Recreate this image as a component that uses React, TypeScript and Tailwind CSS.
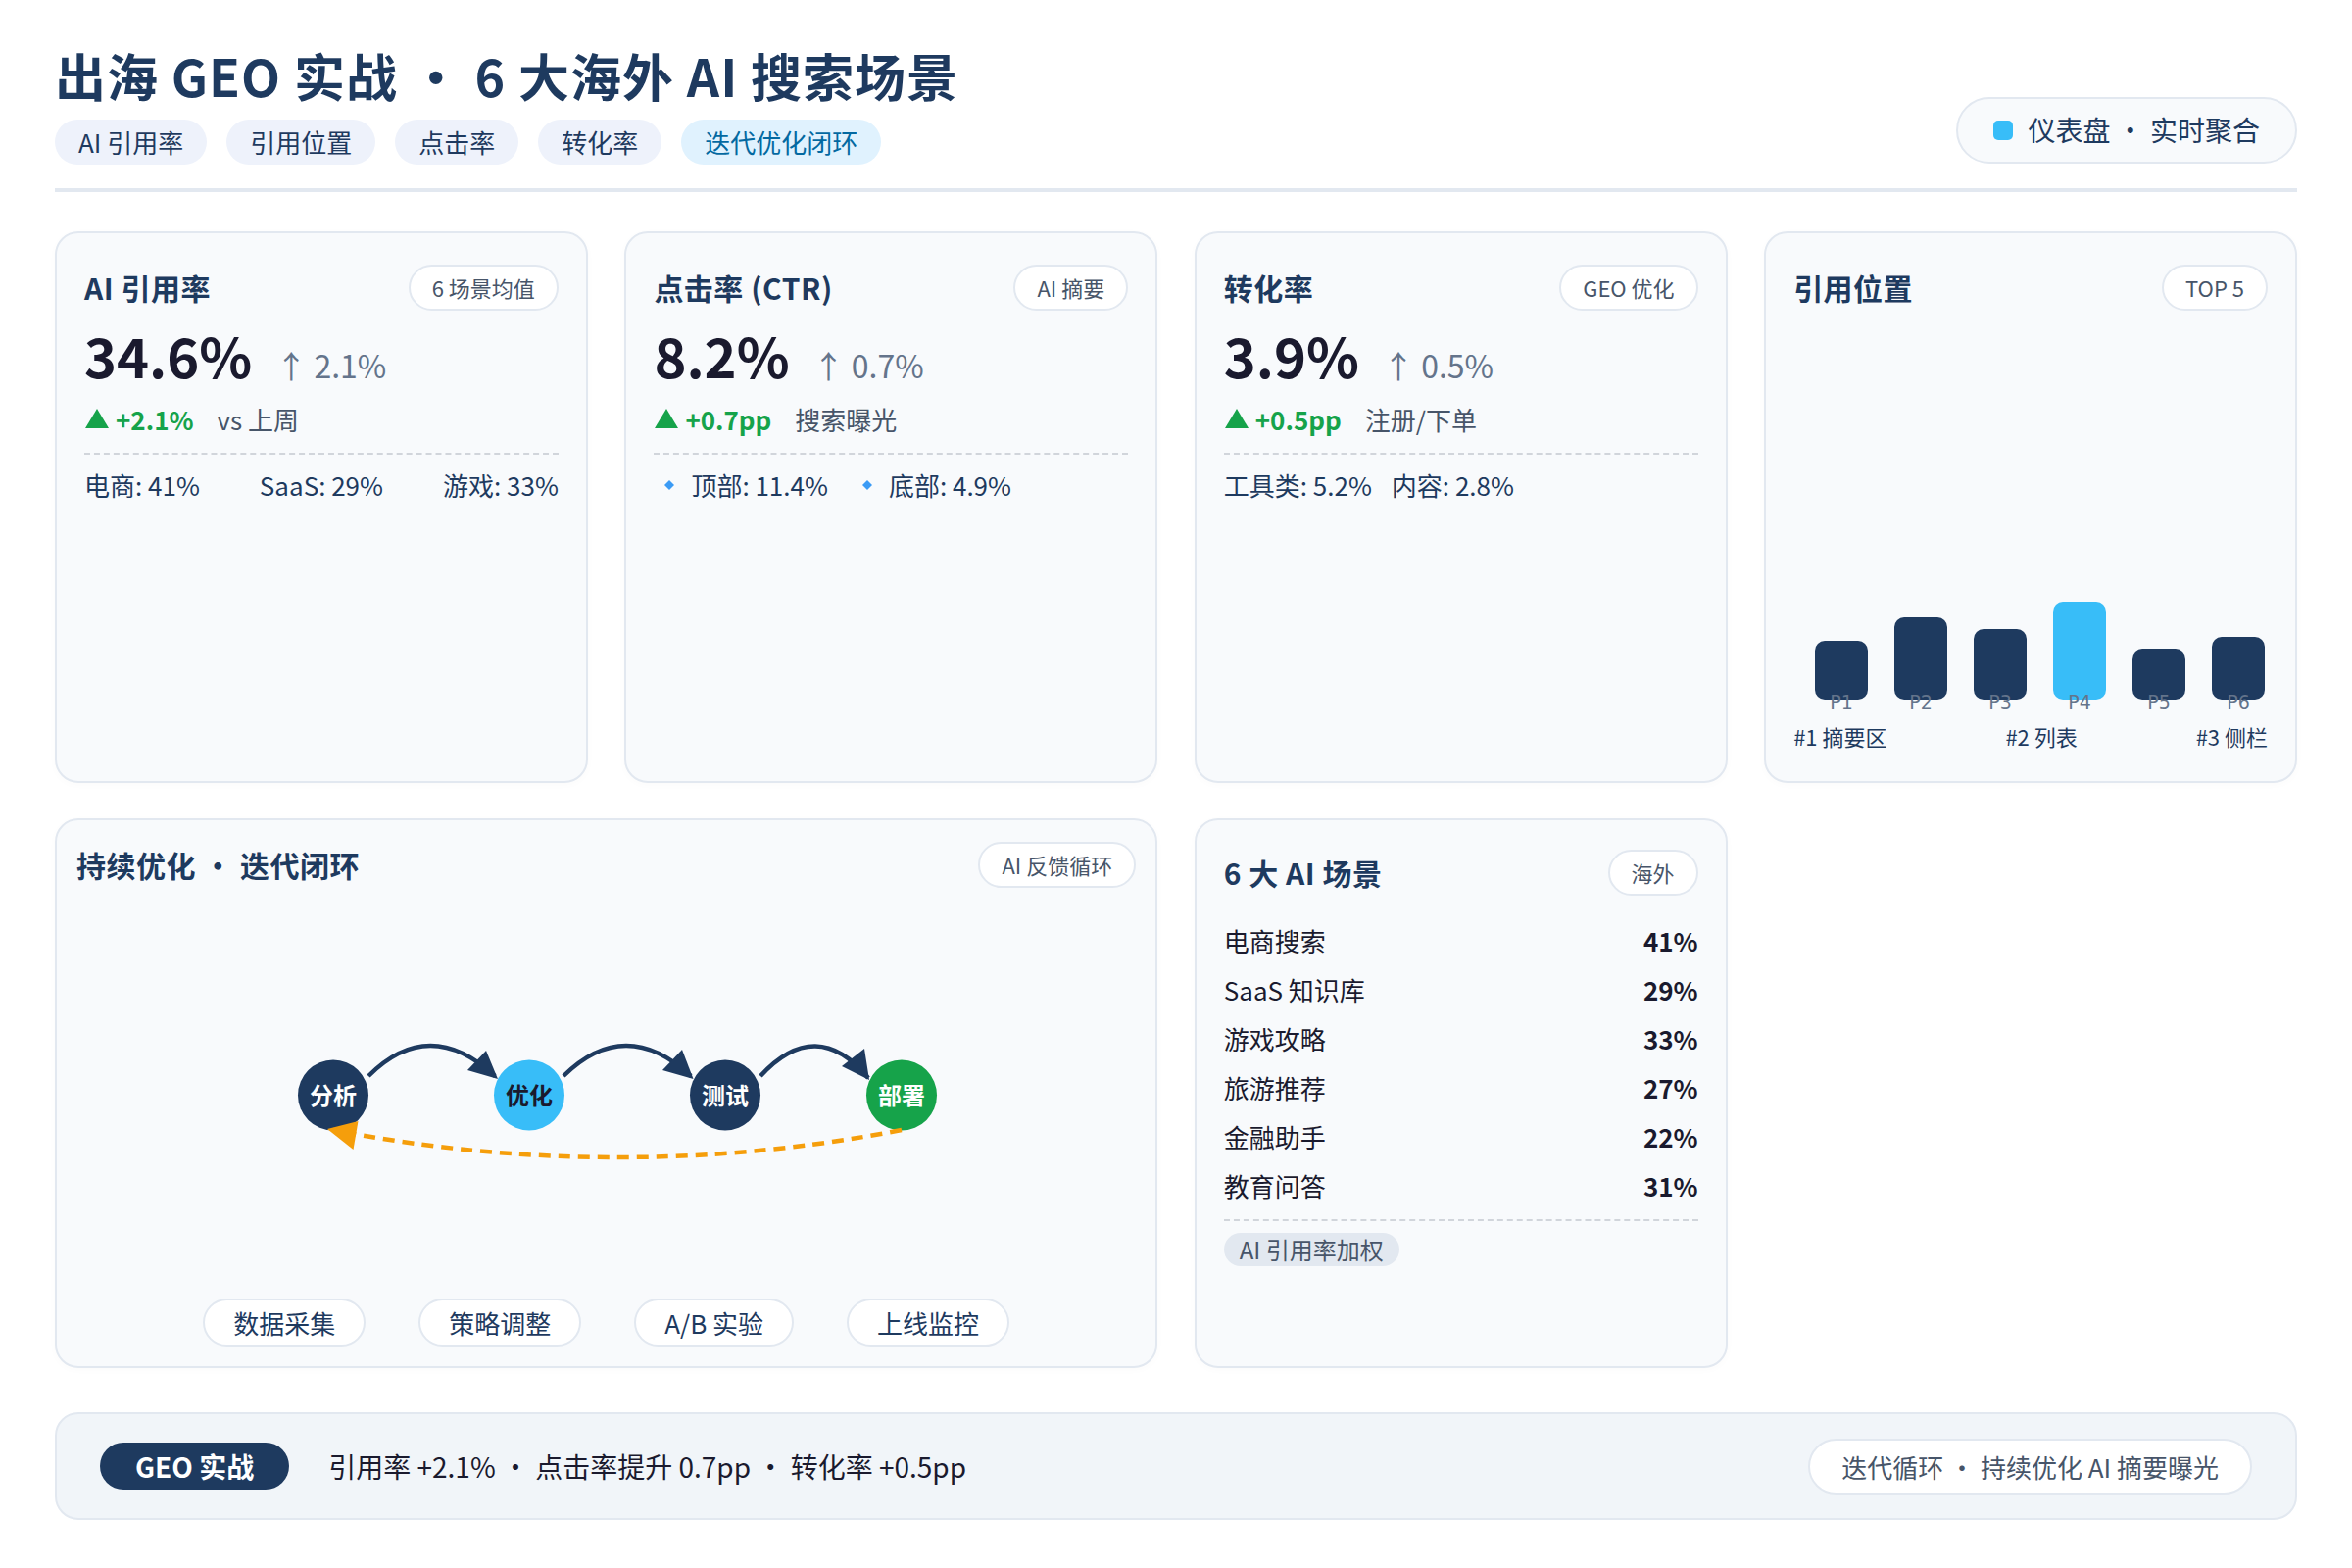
const font = "font-['Noto_Sans_CJK_SC','Noto_Sans',sans-serif]";

function Pill({ children }: { children: React.ReactNode }) {
  return (
    <span className="flex h-[47px] items-center rounded-full border-2 border-[#e2e8f0] bg-white px-[22px] text-[22px] text-[#475569]">
      {children}
    </span>
  );
}

function CardHead({ title, pill }: { title: string; pill: string }) {
  return (
    <div className="flex items-center justify-between">
      <span className="text-[30px] font-bold tracking-[0.5px] text-[#1e3a5f]">{title}</span>
      <Pill>{pill}</Pill>
    </div>
  );
}

function Diamond() {
  return (
    <svg width="12" height="12" viewBox="0 0 12 12" className="mr-[16px] shrink-0">
      <path d="M6 1 L11 6 L6 11 L1 6 Z" fill="#3b9bf5" />
    </svg>
  );
}

function Metric({
  title,
  pill,
  value,
  up,
  delta,
  note,
  children,
}: {
  title: string;
  pill: string;
  value: string;
  up: string;
  delta: string;
  note: string;
  children: React.ReactNode;
}) {
  return (
    <div className="h-[563px] rounded-[24px] border-2 border-[#e2e8f0] bg-[#f8fafc] px-[28px] pt-[32px] shadow-[0_2px_8px_rgba(0,0,0,0.02)]">
      <CardHead title={title} pill={pill} />
      <div className="mt-[3px] flex h-[72px] items-baseline">
        <span className="text-[56px] font-bold text-[#1a1a2e]">{value}</span>
        <span className="ml-[24px] text-[32px] text-[#64748b]">{up}</span>
      </div>
      <div className="mt-[15px] flex h-[40px] items-center">
        <svg width="26" height="20" viewBox="0 0 26 20" className="shrink-0">
          <path d="M13 0 L25 20 L1 20 Z" fill="#16a34a" />
        </svg>
        <span className="ml-[6px] text-[26px] font-bold text-[#16a34a]">{delta}</span>
        <span className="ml-[24px] text-[26px] text-[#475569]">{note}</span>
      </div>
      <div className="mt-[15px] border-t-2 border-dashed border-[#d1d5db] pt-[11px] text-[26px] text-[#1e3a5f]">
        {children}
      </div>
    </div>
  );
}

const bars = [
  { label: "P1", h: "h-[60px]", c: "bg-[#1e3a5f]" },
  { label: "P2", h: "h-[84px]", c: "bg-[#1e3a5f]" },
  { label: "P3", h: "h-[72px]", c: "bg-[#1e3a5f]" },
  { label: "P4", h: "h-[100px]", c: "bg-[#38bdf8]" },
  { label: "P5", h: "h-[52px]", c: "bg-[#1e3a5f]" },
  { label: "P6", h: "h-[64px]", c: "bg-[#1e3a5f]" },
];

const scenes = [
  ["电商搜索", "41%"],
  ["SaaS 知识库", "29%"],
  ["游戏攻略", "33%"],
  ["旅游推荐", "27%"],
  ["金融助手", "22%"],
  ["教育问答", "31%"],
];

function Loop() {
  const nodes = [
    { x: 340, t: "分析", f: "#1e3a5f", c: "#ffffff" },
    { x: 540, t: "优化", f: "#38bdf8", c: "#1a1a2e" },
    { x: 740, t: "测试", f: "#1e3a5f", c: "#ffffff" },
    { x: 920, t: "部署", f: "#16a34a", c: "#ffffff" },
  ];
  return (
    <svg width="1122" height="300" viewBox="58 960 1122 300" className="block">
      {nodes.map((n) => (
        <g key={n.t}>
          <circle cx={n.x} cy={1117.5} r={36} fill={n.f} />
          <text x={n.x} y={1127} textAnchor="middle" fontSize="24" fontWeight="700" fill={n.c}>
            {n.t}
          </text>
        </g>
      ))}
      <g fill="none" stroke="#1e3a5f" strokeWidth="4.5">
        <path d="M376 1098 Q438 1036 505 1098" />
        <path d="M575 1098 Q638 1036 705 1098" />
        <path d="M776 1098 Q833 1036 886 1100" />
      </g>
      <polygon points="508,1101 496,1072 477,1092" fill="#1e3a5f" />
      <polygon points="707.5,1101 696,1071 676,1092" fill="#1e3a5f" />
      <polygon points="887,1102 882,1070 859,1088" fill="#1e3a5f" />
      <path d="M920 1153 Q630 1209 340 1153" fill="none" stroke="#f59e0b" strokeWidth="4.5" strokeDasharray="12 8" />
      <polygon points="334,1152 365.5,1144 360.5,1173" fill="#f59e0b" />
    </svg>
  );
}

export default function App() {
  return (
    <div className={`h-[1600px] w-[2400px] bg-white px-[56px] pt-[46px] ${font}`}>
      <header className="flex items-end justify-between border-b-[4px] border-[#e2e8f0] pb-[24px]">
        <div>
          <h1 className="text-[52px] leading-[62px] font-bold tracking-[1px] text-[#1e3a5f]">出海 GEO 实战 · 6 大海外 AI 搜索场景</h1>
          <div className="mt-[14px] flex gap-[20px] text-[26px] text-[#1e3a5f]">
            {["AI 引用率", "引用位置", "点击率", "转化率"].map((t) => (
              <span key={t} className="flex h-[46px] items-center rounded-full bg-[#eef2fb] px-[24px] pb-[2px]">
                {t}
              </span>
            ))}
            <span className="flex h-[46px] items-center rounded-full bg-[#e0f2fe] px-[24px] pb-[2px] text-[#0369a1]">迭代优化闭环</span>
          </div>
        </div>
        <div className="mb-[1px] flex h-[68px] items-center rounded-full border-2 border-[#e2e8f0] bg-[#f8fafc] pr-[36px] pb-[2px] pl-[36px] text-[28px] text-[#1e3a5f]">
          <span className="mt-[2px] mr-[15px] h-[20px] w-[20px] rounded-[5px] bg-[#38bdf8]" />
          仪表盘 · 实时聚合
        </div>
      </header>

      <main className="mt-[40px] grid grid-cols-4 gap-x-[37.5px] gap-y-[36px]">
        <Metric title="AI 引用率" pill="6 场景均值" value="34.6%" up="↑ 2.1%" delta="+2.1%" note="vs 上周">
          <div className="flex justify-between">
            <span>电商: 41%</span>
            <span>SaaS: 29%</span>
            <span>游戏: 33%</span>
          </div>
        </Metric>
        <Metric title="点击率 (CTR)" pill="AI 摘要" value="8.2%" up="↑ 0.7%" delta="+0.7pp" note="搜索曝光">
          <div className="flex items-center pl-[10px]">
            <Diamond />
            <span>顶部: 11.4%</span>
            <span className="ml-[34px] flex items-center">
              <Diamond />
              底部: 4.9%
            </span>
          </div>
        </Metric>
        <Metric title="转化率" pill="GEO 优化" value="3.9%" up="↑ 0.5%" delta="+0.5pp" note="注册/下单">
          <div className="flex gap-[20px]">
            <span>工具类: 5.2%</span>
            <span>内容: 2.8%</span>
          </div>
        </Metric>

        <div className="flex h-[563px] flex-col rounded-[24px] border-2 border-[#e2e8f0] bg-[#f8fafc] px-[28px] pt-[32px] shadow-[0_2px_8px_rgba(0,0,0,0.02)]">
          <CardHead title="引用位置" pill="TOP 5" />
          <div className="mt-auto flex items-end gap-[27px] pl-[22px]">
            {bars.map((b) => (
              <div key={b.label} className="flex w-[54px] flex-col items-center">
                <div className={`w-[54px] rounded-[10px] ${b.h} ${b.c}`} />
                <span className="-mt-[8px] font-['DejaVu_Sans'] text-[19px] leading-[20px] text-[#64748b]">{b.label}</span>
              </div>
            ))}
          </div>
          <div className="mt-[9px] mb-[30px] flex justify-between text-[22px] leading-[32px] text-[#1e3a5f]">
            <span>#1 摘要区</span>
            <span>#2 列表</span>
            <span>#3 侧栏</span>
          </div>
        </div>

        <div className="col-span-2 flex h-[561px] flex-col rounded-[24px] border-2 border-[#e2e8f0] bg-[#f8fafc] px-[20px] pt-[22px] shadow-[0_2px_8px_rgba(0,0,0,0.02)]">
          <CardHead title="持续优化 · 迭代闭环" pill="AI 反馈循环" />
          <div className="-mx-[20px] mt-[54px]">
            <Loop />
          </div>
          <div className="mt-auto mb-[20px] flex justify-center gap-[54px] text-[26px] text-[#1e3a5f]">
            {["数据采集", "策略调整", "A/B 实验", "上线监控"].map((t) => (
              <span key={t} className="flex h-[49px] items-center rounded-full border-2 border-[#e2e8f0] bg-white px-[29px]">
                {t}
              </span>
            ))}
          </div>
        </div>

        <div className="h-[561px] rounded-[24px] border-2 border-[#e2e8f0] bg-[#f8fafc] px-[28px] pt-[30px] shadow-[0_2px_8px_rgba(0,0,0,0.02)]">
          <CardHead title="6 大 AI 场景" pill="海外" />
          <div className="mt-[20px] flex flex-col">
            {scenes.map(([k, v]) => (
              <div key={k} className="flex h-[50px] items-center justify-between text-[26px] text-[#1a1a2e]">
                <span>{k}</span>
                <span className="font-bold text-[#1a1a2e]">{v}</span>
              </div>
            ))}
          </div>
          <div className="mt-[10px] border-t-2 border-dashed border-[#d1d5db] pt-[12px]">
            <span className="inline-flex h-[34px] items-center rounded-full bg-[#e2e8f0] px-[16px] text-[24px] text-[#475569]">AI 引用率加权</span>
          </div>
        </div>
      </main>

      <footer className="mt-[45px] flex h-[110px] items-center justify-between rounded-[24px] border-2 border-[#e2e8f0] bg-[#f1f5f9] pr-[44px] pl-[44px]">
        <div className="flex items-center">
          <span className="flex h-[48px] items-center rounded-full bg-[#1e3a5f] px-[36px] text-[28px] font-bold text-white">GEO 实战</span>
          <span className="ml-[40px] text-[28px] text-[#1a1a2e]">引用率 +2.1% · 点击率提升 0.7pp · 转化率 +0.5pp</span>
        </div>
        <span className="flex h-[57px] items-center rounded-full border-2 border-[#e2e8f0] bg-white px-[32px] text-[26px] text-[#475569]">
          迭代循环 · 持续优化 AI 摘要曝光
        </span>
      </footer>
    </div>
  );
}
